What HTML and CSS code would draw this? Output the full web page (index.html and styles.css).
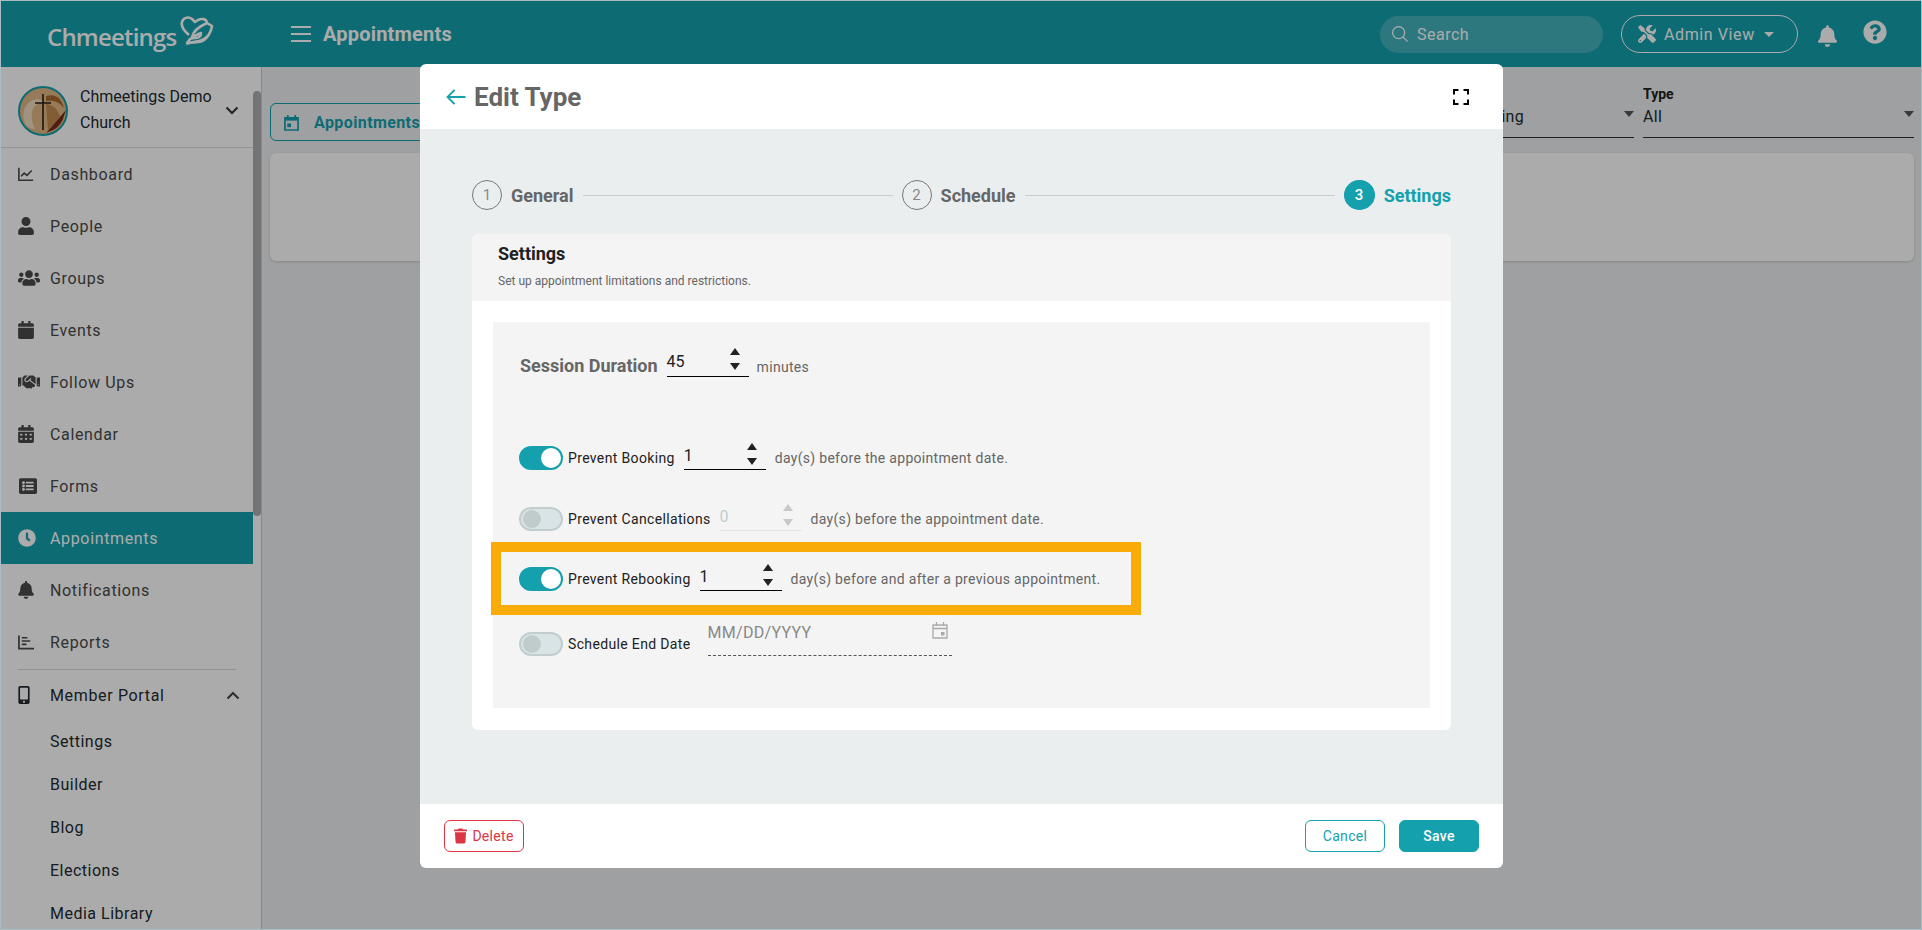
FILE: index.html
```html
<!DOCTYPE html>
<html lang="en">
<head>
<meta charset="utf-8">
<title>Edit Type</title>
<link rel="stylesheet" href="styles.css">
</head>
<body>
<div class="frame">
  <header class="topbar">
    <div class="logo">
      <span class="logo-text">Chmeetings</span>
      <svg class="logo-mark" viewBox="0 0 34 34"><path d="M9 20C3 15 1 11 2 7c1-4 6-6 10-3l3 3 3-2c4-2 8-1 9 2M27 8l5 3c-1 7-5 12-10 14-4 2-9 2-15 3l3-4c2-1 4-1 6-1 3 0 5-2 5-5-3 1-6 3-9 4 1-5 6-10 15-14z" fill="none" stroke="#fff" stroke-width="2.6" stroke-linejoin="round"/><path d="M5 31c5-3 10-2 15-3 6-1 10-6 12-15-3 6-5 9-9 11-5 2-12 1-18 7z" fill="#fff"/></svg>
    </div>
    <button class="burger" aria-label="Menu"><span></span><span></span><span></span></button>
    <h1 class="page-title">Appointments</h1>
    <div class="top-actions">
      <div class="search">
        <svg viewBox="0 0 20 20" class="search-icon"><circle cx="8.5" cy="8.5" r="6.7" fill="none" stroke="currentColor" stroke-width="1.4"/><path d="M13.4 13.4 18.5 18.5" stroke="currentColor" stroke-width="1.4"/></svg>
        <span>Search</span>
      </div>
      <div class="admin-view">
        <svg viewBox="0 0 512 512" class="tools-icon"><path fill="currentColor" d="M501.1 395.7L384 278.6c-23.1-23.1-57.6-27.6-85.4-13.9L192 158.1V96L64 0 0 64l96 128h62.1l106.6 106.6c-13.6 27.8-9.2 62.3 13.9 85.4l117.1 117.1c14.6 14.6 38.2 14.6 52.7 0l52.7-52.7c14.5-14.6 14.5-38.2 0-52.7zM331.7 225c28.3 0 54.9 11 74.9 31l19.4 19.4c15.8-6.9 30.8-16.5 43.8-29.5 37.1-37.1 49.7-89.3 37.9-136.7-2.2-9-13.5-12.1-20.1-5.5l-74.4 74.4-67.9-11.3L334 98.9l74.4-74.4c6.6-6.6 3.4-17.9-5.7-20.2-47.4-11.7-99.6.9-136.6 37.9-28.5 28.5-41.9 66.1-41.2 103.6l82.1 82.1c8.1-1.9 16.5-2.9 24.7-2.9zm-103.9 82l-56.7-56.7L18.7 402.8c-25 25-25 65.5 0 90.5s65.5 25 90.5 0l123.6-123.6c-7.6-19.9-9.9-41.6-5-62.7zM64 472c-13.2 0-24-10.8-24-24 0-13.3 10.7-24 24-24s24 10.7 24 24c0 13.2-10.7 24-24 24z"/></svg>
        <span>Admin View</span>
        <i class="caret"></i>
      </div>
      <svg viewBox="0 0 448 512" class="top-bell"><path fill="currentColor" d="M224 512c35.32 0 63.97-28.65 63.97-64H160.03c0 35.35 28.65 64 63.97 64zm215.39-149.71c-19.32-20.76-55.47-51.99-55.47-154.29 0-77.7-54.48-139.9-127.94-155.16V32c0-17.67-14.32-32-31.98-32s-31.98 14.33-31.98 32v20.84C118.56 68.1 64.08 130.3 64.08 208c0 102.3-36.15 133.53-55.47 154.29-6 6.45-8.66 14.16-8.61 21.71.11 16.4 12.98 32 32.1 32h383.8c19.12 0 32-15.6 32.1-32 .05-7.55-2.61-15.27-8.61-21.71z"/></svg>
      <svg viewBox="0 0 512 512" class="top-help"><path fill="currentColor" d="M504 256c0 136.997-111.043 248-248 248S8 392.997 8 256C8 119.083 119.043 8 256 8s248 111.083 248 248zM262.655 90c-54.497 0-89.255 22.957-116.549 63.758-3.536 5.286-2.353 12.415 2.715 16.258l34.699 26.31c5.205 3.947 12.621 3.008 16.665-2.122 17.864-22.658 30.113-35.797 57.303-35.797 20.429 0 45.698 13.148 45.698 32.958 0 14.976-12.363 22.667-32.534 33.976C247.128 238.528 216 254.941 216 296v4c0 6.627 5.373 12 12 12h56c6.627 0 12-5.373 12-12v-1.333c0-28.462 83.186-29.647 83.186-106.667 0-58.002-60.165-102-116.531-102zM256 338c-25.365 0-46 20.635-46 46 0 25.364 20.635 46 46 46s46-20.636 46-46c0-25.365-20.635-46-46-46z"/></svg>
    </div>
  </header>

  <div class="workspace">
    <aside class="sidebar">
      <div class="org">
        <svg class="avatar" viewBox="0 0 50 50">
          <circle cx="25" cy="25" r="24" fill="#e2b884" stroke="#14a0ad" stroke-width="2"/>
          <path d="M7 38c-3-10-2-18 6-23 6-3 12-2 14 3-6-2-12 1-13 8-1 5 0 11 3 17-4 0-8-2-10-5z" fill="#f0dcc0"/>
          <path d="M30 46c8-2 14-8 16-16L48 24 28 47z" fill="#7a2a1c"/>
          <path d="M28 10c10-3 16 3 18 12-5-6-10-8-18-7z" fill="#a8692f"/>
          <path d="M28 18c8 1 12 6 14 13l-12 13z" fill="#c08a4f"/>
          <path d="M25 8v36M17 17h16" stroke="#2a1a10" stroke-width="1.6"/>
        </svg>
        <div class="org-name">Chmeetings Demo Church</div>
        <svg class="org-chev" viewBox="0 0 14 9"><path d="M1.5 1.5 7 7l5.5-5.5" fill="none" stroke="currentColor" stroke-width="2"/></svg>
      </div>
      <nav class="nav">
        <a class="nav-item"><svg class="ni" viewBox="0 0 18 16"><path d="M1 1v14h16" fill="none" stroke="currentColor" stroke-width="1.8"/><path d="M3.5 10.5 7 7l3 2.5L15.5 4" fill="none" stroke="currentColor" stroke-width="1.8"/></svg><span>Dashboard</span></a>
        <a class="nav-item"><svg class="ni" viewBox="0 0 448 512"><path fill="currentColor" d="M224 256c70.7 0 128-57.3 128-128S294.7 0 224 0 96 57.3 96 128s57.3 128 128 128zm89.6 32h-16.7c-22.2 10.2-46.9 16-72.9 16s-50.6-5.8-72.9-16h-16.7C60.2 288 0 348.2 0 422.4V464c0 26.5 21.5 48 48 48h352c26.5 0 48-21.5 48-48v-41.6c0-74.2-60.2-134.4-134.4-134.4z"/></svg><span>People</span></a>
        <a class="nav-item"><svg class="ni wide" viewBox="0 0 640 512"><path fill="currentColor" d="M96 224c35.3 0 64-28.7 64-64s-28.7-64-64-64-64 28.7-64 64 28.7 64 64 64zm448 0c35.3 0 64-28.7 64-64s-28.7-64-64-64-64 28.7-64 64 28.7 64 64 64zm32 32h-64c-17.6 0-33.5 7.1-45.1 18.6 40.3 22.1 68.9 62 75.1 109.4h66c17.7 0 32-14.3 32-32v-32c0-35.3-28.7-64-64-64zm-256 0c61.9 0 112-50.1 112-112S381.9 32 320 32 208 82.1 208 144s50.1 112 112 112zm76.8 32h-8.3c-20.8 10-43.9 16-68.5 16s-47.6-6-68.5-16h-8.3C179.6 288 128 339.6 128 403.2V432c0 26.5 21.5 48 48 48h288c26.5 0 48-21.5 48-48v-28.8c0-63.6-51.6-115.2-115.2-115.2zm-223.7-13.4C161.5 263.1 145.6 256 128 256H64c-35.3 0-64 28.7-64 64v32c0 17.7 14.3 32 32 32h65.9c6.3-47.4 34.9-87.3 75.2-109.4z"/></svg><span>Groups</span></a>
        <a class="nav-item"><svg class="ni" viewBox="0 0 448 512"><path fill="currentColor" d="M12 192h424c6.6 0 12 5.4 12 12v260c0 26.5-21.5 48-48 48H48c-26.5 0-48-21.5-48-48V204c0-6.6 5.4-12 12-12zm436-44v-36c0-26.5-21.5-48-48-48h-48V12c0-6.6-5.4-12-12-12h-40c-6.6 0-12 5.4-12 12v52H160V12c0-6.6-5.4-12-12-12h-40c-6.6 0-12 5.4-12 12v52H48C21.5 64 0 85.5 0 112v36c0 6.6 5.4 12 12 12h424c6.6 0 12-5.4 12-12z"/></svg><span>Events</span></a>
        <a class="nav-item"><svg class="ni wide" viewBox="0 0 640 512"><path fill="currentColor" d="M434.7 64h-85.9c-8 0-15.7 3-21.6 8.4l-98.3 90c-.1.1-.2.3-.3.4-16.6 15.6-16.3 40.5-2.1 56 12.7 13.9 39.4 17.6 56.1 2.7.1-.1.3-.1.4-.2l79.9-73.2c6.5-5.9 16.7-5.5 22.6 1 6 6.5 5.5 16.6-1 22.6l-26.1 23.9L504 313.8c2.9 2.4 5.5 5 7.9 7.7V128l-54.6-54.6c-5.9-6-14.1-9.4-22.6-9.4zM544 128.2v223.9c0 17.7 14.3 32 32 32h64V128.2h-96zm48 223.9c-8.8 0-16-7.2-16-16s7.2-16 16-16 16 7.2 16 16-7.2 16-16 16zM0 384h64c17.7 0 32-14.3 32-32V128.2H0V384zm48-63.9c8.8 0 16 7.2 16 16s-7.2 16-16 16-16-7.2-16-16c0-8.9 7.2-16 16-16zm435.9 18.6L334.6 217.5l-30 27.5c-29.7 27.1-75.2 24.5-101.7-4.4-26.9-29.4-24.8-74.9 4.4-101.7L289.1 64h-83.8c-8.5 0-16.6 3.4-22.6 9.4L128 128v223.9h18.3l90.5 81.9c27.4 22.3 67.7 18.1 90-9.3l.2-.2 17.9 15.5c15.9 13 39.4 10.5 52.3-5.4l31.4-38.6 5.4 4.4c13.7 11.1 33.9 9.1 45-4.7l9.5-11.7c11.2-13.8 9.1-33.9-4.6-45.1z"/></svg><span>Follow Ups</span></a>
        <a class="nav-item"><svg class="ni" viewBox="0 0 448 512"><path fill="currentColor" fill-rule="evenodd" d="M12 192h424c6.6 0 12 5.4 12 12v260c0 26.5-21.5 48-48 48H48c-26.5 0-48-21.5-48-48V204c0-6.6 5.4-12 12-12zM60 250v50h60v-50zm134 0v50h60v-50zm134 0v50h60v-50zM60 370v50h60v-50zm134 0v50h60v-50zm134 0v50h60v-50zM448 148v-36c0-26.5-21.5-48-48-48h-48V12c0-6.6-5.4-12-12-12h-40c-6.6 0-12 5.4-12 12v52H160V12c0-6.6-5.4-12-12-12h-40c-6.6 0-12 5.4-12 12v52H48C21.5 64 0 85.5 0 112v36c0 6.6 5.4 12 12 12h424c6.6 0 12-5.4 12-12z"/></svg><span>Calendar</span></a>
        <a class="nav-item"><svg class="ni wider" viewBox="0 0 512 512"><path fill="currentColor" d="M464 480H48c-26.51 0-48-21.49-48-48V80c0-26.51 21.49-48 48-48h416c26.51 0 48 21.49 48 48v352c0 26.51-21.49 48-48 48zM128 120c-22.091 0-40 17.909-40 40s17.909 40 40 40 40-17.909 40-40-17.909-40-40-40zm0 96c-22.091 0-40 17.909-40 40s17.909 40 40 40 40-17.909 40-40-17.909-40-40-40zm0 96c-22.091 0-40 17.909-40 40s17.909 40 40 40 40-17.909 40-40-17.909-40-40-40zm288-136v-32c0-6.627-5.373-12-12-12H204c-6.627 0-12 5.373-12 12v32c0 6.627 5.373 12 12 12h200c6.627 0 12-5.373 12-12zm0 96v-32c0-6.627-5.373-12-12-12H204c-6.627 0-12 5.373-12 12v32c0 6.627 5.373 12 12 12h200c6.627 0 12-5.373 12-12zm0 96v-32c0-6.627-5.373-12-12-12H204c-6.627 0-12 5.373-12 12v32c0 6.627 5.373 12 12 12h200c6.627 0 12-5.373 12-12z"/></svg><span>Forms</span></a>
        <a class="nav-item active"><svg class="ni clock" viewBox="0 0 512 512"><path fill="currentColor" d="M256,8C119,8,8,119,8,256S119,504,256,504,504,393,504,256,393,8,256,8Zm92.49,313h0l-20,25a16,16,0,0,1-22.49,2.5h0l-67-49.72a40,40,0,0,1-15-31.23V112a16,16,0,0,1,16-16h32a16,16,0,0,1,16,16V256l58,42.5A16,16,0,0,1,348.49,321Z"/></svg><span>Appointments</span></a>
        <a class="nav-item"><svg class="ni" viewBox="0 0 448 512"><path fill="currentColor" d="M224 512c35.32 0 63.97-28.65 63.97-64H160.03c0 35.35 28.65 64 63.97 64zm215.39-149.71c-19.32-20.76-55.47-51.99-55.47-154.29 0-77.7-54.48-139.9-127.94-155.16V32c0-17.67-14.32-32-31.98-32s-31.98 14.33-31.98 32v20.84C118.56 68.1 64.08 130.3 64.08 208c0 102.3-36.15 133.53-55.47 154.29-6 6.45-8.66 14.16-8.61 21.71.11 16.4 12.98 32 32.1 32h383.8c19.12 0 32-15.6 32.1-32 .05-7.55-2.61-15.27-8.61-21.71z"/></svg><span>Notifications</span></a>
        <a class="nav-item"><svg class="ni" viewBox="0 0 17 16"><path d="M1 1v14h16" fill="none" stroke="currentColor" stroke-width="1.8"/><path d="M4 3.5h6M4 7h9M4 10.5h5" fill="none" stroke="currentColor" stroke-width="1.7"/></svg><span>Reports</span></a>
        <div class="nav-rule"></div>
        <a class="nav-item portal"><svg class="ni phone" viewBox="0 0 320 512"><path fill="currentColor" d="M272 0H48C21.5 0 0 21.5 0 48v416c0 26.5 21.5 48 48 48h224c26.5 0 48-21.5 48-48V48c0-26.5-21.5-48-48-48zM160 480c-17.7 0-32-14.3-32-32s14.3-32 32-32 32 14.3 32 32-14.3 32-32 32zm112-108c0 6.6-5.4 12-12 12H60c-6.6 0-12-5.4-12-12V60c0-6.6 5.4-12 12-12h200c6.6 0 12 5.4 12 12v312z"/></svg><span>Member Portal</span><svg class="portal-chev" viewBox="0 0 14 9"><path d="M1.5 7.5 7 2l5.5 5.5" fill="none" stroke="currentColor" stroke-width="2"/></svg></a>
        <a class="sub-item">Settings</a>
        <a class="sub-item">Builder</a>
        <a class="sub-item">Blog</a>
        <a class="sub-item">Elections</a>
        <a class="sub-item">Media Library</a>
      </nav>
    </aside>
    <div class="side-scroll"><div class="side-thumb"></div></div>

    <main class="content">
      <div class="toolbar">
        <div class="tab-btn">
          <svg viewBox="0 0 16 18" class="cal-small"><path d="M1 4h14v13H1zM4 1v4M12 1v4" fill="none" stroke="currentColor" stroke-width="1.8"/><path d="M1 4h14v3H1z" fill="currentColor"/><rect x="3.5" y="10" width="4" height="4" fill="currentColor"/></svg>
          <span>Appointments</span>
        </div>
        <div class="filters">
          <div class="select sel-status"><label>Status</label><div class="sel-val">Upcoming<i class="sel-caret"></i></div></div>
          <div class="select sel-type"><label>Type</label><div class="sel-val">All<i class="sel-caret"></i></div></div>
        </div>
      </div>
      <div class="empty-card"></div>
    </main>
  </div>

  <div class="overlay"></div>

  <section class="modal">
    <div class="modal-head">
      <svg class="back" viewBox="0 0 20 16"><path d="M19.5 8H1.5M8.5 1 1.5 8l7 7" fill="none" stroke="currentColor" stroke-width="1.8"/></svg>
      <h2>Edit Type</h2>
      <svg class="expand" viewBox="0 0 16 16"><path d="M1 5.5V1h4.5M10.5 1H15v4.5M15 10.5V15h-4.5M5.5 15H1v-4.5" fill="none" stroke="#000" stroke-width="2"/></svg>
    </div>
    <div class="modal-body">
      <div class="stepper">
        <div class="step-num">1</div><div class="step-label">General</div><div class="step-line"></div>
        <div class="step-num">2</div><div class="step-label">Schedule</div><div class="step-line"></div>
        <div class="step-num current">3</div><div class="step-label current">Settings</div>
      </div>
      <div class="card">
        <div class="card-head">
          <h3>Settings</h3>
          <p>Set up appointment limitations and restrictions.</p>
        </div>
        <div class="card-body">
          <div class="panel duration">
            <strong class="dur-label">Session Duration</strong>
            <div class="num"><span class="num-val">45</span><span class="spin"><i class="up"></i><i class="down"></i></span></div>
            <span class="hint">minutes</span>
          </div>
          <div class="panel rules">
            <div class="rule r1">
              <span class="toggle on"></span><span class="rule-label">Prevent Booking</span>
              <div class="num"><span class="num-val">1</span><span class="spin"><i class="up"></i><i class="down"></i></span></div>
              <span class="hint">day(s) before the appointment date.</span>
            </div>
            <div class="rule r2">
              <span class="toggle"></span><span class="rule-label">Prevent Cancellations</span>
              <div class="num disabled"><span class="num-val">0</span><span class="spin"><i class="up"></i><i class="down"></i></span></div>
              <span class="hint">day(s) before the appointment date.</span>
            </div>
            <div class="rule r3">
              <span class="toggle on"></span><span class="rule-label">Prevent Rebooking</span>
              <div class="num"><span class="num-val">1</span><span class="spin"><i class="up"></i><i class="down"></i></span></div>
              <span class="hint">day(s) before and after a previous appointment.</span>
            </div>
            <div class="rule r4">
              <span class="toggle"></span><span class="rule-label">Schedule End Date</span>
              <div class="date">
                <span>MM/DD/YYYY</span>
                <svg viewBox="0 0 16 18" class="date-icon"><path d="M1 4h14v13H1zM4.5 1v4M11.500 1v4M1 7.500h14" fill="none" stroke="currentColor" stroke-width="1.300"/><rect x="9" y="11" width="3.500" height="3.500" fill="currentColor"/></svg>
              </div>
            </div>
          </div>
        </div>
      </div>
    </div>
    <div class="modal-foot">
      <button class="btn btn-delete"><svg viewBox="0 0 448 512" class="trash"><path fill="currentColor" d="M432 32H312l-9.4-18.7A24 24 0 0 0 281.1 0H166.8a23.72 23.72 0 0 0-21.4 13.3L136 32H16A16 16 0 0 0 0 48v32a16 16 0 0 0 16 16h416a16 16 0 0 0 16-16V48a16 16 0 0 0-16-16zM53.2 467a48 48 0 0 0 47.9 45h245.8a48 48 0 0 0 47.9-45L416 128H32z"/></svg>Delete</button>
      <button class="btn btn-cancel">Cancel</button>
      <button class="btn btn-save">Save</button>
    </div>
  </section>
</div>
</body>
</html>
```
FILE: styles.css
```css
* { box-sizing: border-box; }
html, body { margin: 0; padding: 0; height: 100%; overflow: hidden; }
body { font-family: Roboto, "Liberation Sans", sans-serif; color: #333; }
a { display: block; }
h1, h2, h3, p { margin: 0; }
button { font-family: inherit; cursor: pointer; }

.frame { position: relative; width: 1922px; height: 930px; border: 1px solid #a9bcc6; overflow: hidden; display: flex; flex-direction: column; background: #eceff0; }

/* top bar */
.topbar { flex: none; height: 66px; background: #14a0ad; color: #fff; display: flex; align-items: center; }
.logo { width: 290px; padding-left: 46px; display: flex; align-items: center; }
.logo-text { font-family: "Open Sans", Roboto, sans-serif; font-weight: 600; font-size: 24px; letter-spacing: -0.8px; margin-top: 5px; }
.logo-mark { width: 34px; height: 34px; margin-left: 4px; margin-top: -4px; }
.burger { width: 20px; height: 16px; padding: 0; border: 0; background: none; display: flex; flex-direction: column; justify-content: space-between; }
.burger span { display: block; height: 2px; background: #fff; }
.page-title { margin-left: 12px; font-size: 20px; font-weight: 700; letter-spacing: 0.2px; }
.top-actions { margin-left: auto; display: flex; align-items: center; }
.search { width: 223px; height: 37px; border-radius: 19px; background: rgba(255,255,255,.2); display: flex; align-items: center; padding-left: 11px; font-size: 16px; letter-spacing: .5px; color: #fff; }
.search-icon { width: 18px; height: 18px; margin-right: 8px; }
.admin-view { margin-left: 18px; width: 177px; height: 38px; border: 1px solid #fff; border-radius: 19px; display: flex; align-items: center; padding-left: 16px; font-size: 16px; letter-spacing: .6px; }
.tools-icon { width: 18px; height: 18px; margin-right: 8px; }
.caret { width: 0; height: 0; margin-left: 9px; border: 5px solid transparent; border-top: 5px solid #fff; border-bottom: 0; }
.top-bell { width: 19px; height: 22px; margin-left: 20px; margin-top: 3px; }
.top-help { width: 24px; height: 24px; margin-left: 26px; margin-right: 34px; margin-top: -4px; }

/* shell */
.workspace { flex: 1; display: flex; min-height: 0; }
.sidebar { flex: none; width: 252px; background: #fff; overflow: hidden; color: #4a4a4a; }
.org { height: 81px; padding: 19px 0 0 17px; border-bottom: 1px solid #ddd; display: flex; align-items: flex-start; position: relative; color: #212b30; }
.avatar { width: 50px; height: 50px; flex: none; }
.org-name { width: 145px; margin-left: 12px; margin-top: -2px; font-size: 16px; line-height: 26px; }
.org-chev { position: absolute; left: 224px; top: 39px; width: 14px; height: 9px; color: #333; }
.nav-item { height: 52px; display: flex; align-items: center; padding-left: 17px; font-size: 16px; letter-spacing: .65px; }
.ni { width: 16px; height: 18px; flex: none; margin-right: 16px; }
.ni.wide { width: 22px; margin-right: 10px; }
.ni.wider { width: 20px; margin-right: 12px; }
.ni.clock { width: 18px; margin-right: 14px; }
.ni.phone { width: 12px; margin-right: 20px; }
.nav-item.active { background: #14a0ad; color: #fff; }
.nav-rule { height: 1px; margin: 1px 17px 0; background: #d8d8d8; }
.nav-item.portal { height: 50px; color: #212b30; position: relative; }
.portal-chev { position: absolute; left: 225px; top: 21px; width: 14px; height: 9px; color: #444; }
.sub-item { height: 43px; line-height: 43px; padding-left: 49px; font-size: 16px; letter-spacing: .5px; color: #212b30; }
.nav .sub-item:nth-of-type(n) { display: block; }
.side-scroll { flex: none; width: 8px; background: #fff; position: relative; }
.side-thumb { position: absolute; top: 24px; left: 0; width: 8px; height: 425px; border-radius: 4px; background: #aeaeae; }
.content { flex: 1; min-width: 0; padding: 18px 7px 0 8px; border-left: 1px solid #ccc; }
.toolbar { height: 56px; display: flex; align-items: flex-end; justify-content: space-between; }
.tab-btn { height: 38px; width: 200px; border: 1px solid #14a0ad; border-radius: 6px; display: flex; align-items: center; padding-left: 13px; color: #14a0ad; font-size: 16px; font-weight: 700; letter-spacing: .4px; }
.cal-small { width: 15px; height: 17px; margin-right: 15px; }
.filters { display: flex; gap: 9px; margin-bottom: 3px; }
.select { height: 53px; border-bottom: 1px solid #333; position: relative; }
.sel-status { width: 185px; }
.sel-type { width: 271px; }
.select label { display: block; font-size: 14px; font-weight: 700; color: #212121; line-height: 18px; }
.sel-val { font-size: 16px; line-height: 28px; color: #212b30; letter-spacing: .3px; }
.sel-caret { position: absolute; right: 0; bottom: 20px; width: 0; height: 0; border: 5.500px solid transparent; border-top: 6px solid #555; border-bottom: 0; }
.empty-card { height: 108px; margin-top: 12px; border-radius: 6px; background: #fff; box-shadow: 0 1px 3px rgba(0,0,0,.15); }

/* dimming layer */
.overlay { position: absolute; inset: 0; background: rgba(0,0,0,.33); }

/* modal */
.modal { position: absolute; left: 419px; top: 63px; width: 1083px; height: 804px; border-radius: 6px; background: #fff; display: flex; flex-direction: column; overflow: hidden; }
.modal-head { flex: none; height: 65px; display: flex; align-items: center; padding: 0 34px 0 26px; color: #14a0ad; }
.back { width: 20px; height: 16px; }
.modal-head h2 { margin-left: 8px; font-size: 26px; font-weight: 700; color: #666; }
.expand { margin-left: auto; width: 16px; height: 16px; }
.modal-body { flex: 1; background: #ebeeef; padding: 51px 52px 0; }
.stepper { display: flex; align-items: center; height: 30px; }
.step-num { width: 30px; height: 30px; border-radius: 50%; border: 1px solid #777; color: #888; font-size: 15px; display: flex; align-items: center; justify-content: center; flex: none; }
.step-num.current { width: 31px; background: #14a0ad; border-color: #14a0ad; color: #fff; font-weight: 500; }
.step-label { margin-left: 9px; font-size: 18px; font-weight: 700; color: #666; flex: none; }
.step-label.current { color: #14a0ad; }
.step-line { flex: 1; height: 1px; margin: 0 9px; background: #c9cdce; }
.card { margin-top: 24px; border-radius: 6px; overflow: hidden; background: #fff; }
.card-head { height: 67px; background: #f4f4f4; padding: 9px 26px 0; }
.card-head h3 { font-size: 18px; font-weight: 700; color: #212121; line-height: 22px; }
.card-head p { margin-top: 8px; font-size: 12px; line-height: 16px; color: #666; }
.card-body { padding: 21px 21px 22px; }
.panel { background: #f4f4f4; }
.duration { height: 87px; display: flex; align-items: center; padding: 0 0 0 27px; }
.dur-label { font-size: 18px; font-weight: 700; color: #666; }
.num { width: 82px; height: 26px; border-bottom: 1px solid #000; position: relative; font-size: 16px; color: #212121; flex: none; }
.duration .num { margin: 0 8px 0 9px; top: -2px; }
.num-val { display: block; line-height: 22px; }
.spin { position: absolute; right: 9px; top: -3px; width: 10px; height: 26px; }
.spin i { position: absolute; left: 0; width: 0; height: 0; border: 5px solid transparent; }
.spin .up { top: 0; border-bottom: 7px solid #212121; border-top: 0; }
.spin .down { top: 15px; border-top: 7px solid #212121; border-bottom: 0; }
.hint { font-size: 14px; color: #666; letter-spacing: .3px; }
.duration .hint { position: relative; top: 1px; }
.rules { height: 299px; padding: 37px 0 0 26px; }
.rule { display: flex; align-items: center; height: 24px; }
.r2 { margin-top: 37px; }
.r3 { width: 630px; height: 53px; margin: 21px 0 0 -18px; padding-left: 18px; outline: 10px solid #f9ac07; position: relative; }
.r4 { margin-top: 27px; }
.toggle { width: 44px; height: 24px; border-radius: 12px; background: #d8e4e5; border: 2px solid #c3cdce; position: relative; flex: none; }
.toggle::after { content: ""; position: absolute; left: 2px; top: 1px; width: 18px; height: 18px; border-radius: 50%; background: #c0cbcc; }
.toggle.on { background: #14a0ad; border-color: #14a0ad; }
.toggle.on::after { left: 20px; top: 0; width: 20px; height: 20px; background: #fff; }
.rule-label { margin: 0 9px 0 5px; font-size: 14px; letter-spacing: .35px; color: #212121; flex: none; }
.rule .num { margin-top: 0; height: 24px; margin-right: 9px; }
.rule .num-val { line-height: 20px; }
.num.disabled { border-bottom-color: #e6e6e6; color: #bfcfd0; }
.num.disabled .up { border-bottom-color: #c8c8c8; }
.num.disabled .down { border-top-color: #c8c8c8; }
.date { width: 244px; height: 35px; margin: -11px 0 0 8px; border-bottom: 1px dashed #555; display: flex; align-items: flex-start; justify-content: space-between; padding-right: 4px; font-size: 16px; color: #888; letter-spacing: .3px; line-height: 24px; }
.date-icon { width: 16px; height: 18px; color: #aaa; margin-top: 0; }
.modal-foot { flex: none; height: 64px; display: flex; align-items: center; padding: 0 24px; }
.btn { height: 32px; width: 80px; border-radius: 6px; border: 1px solid; font-size: 14px; letter-spacing: .3px; background: #fff; padding: 0; }
.btn-delete { color: #dc3545; border-color: #dc3545; display: flex; align-items: center; justify-content: center; }
.trash { width: 13px; height: 16px; margin-right: 5px; }
.btn-cancel { margin-left: auto; color: #14a0ad; border-color: #14a0ad; }
.btn-save { margin-left: 14px; background: #14a0ad; border-color: #14a0ad; color: #fff; font-weight: 500; }
```
